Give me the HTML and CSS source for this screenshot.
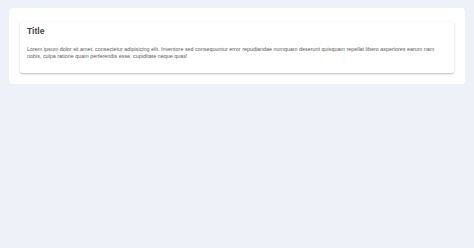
FILE: index.html
```html
<!DOCTYPE html>
<html>
<head>
<meta charset="utf-8">
<link rel="stylesheet" href="styles.css">
</head>
<body>
<div class="panel">
  <div class="card">
    <h1 class="title">Title</h1>
    <p class="text">Lorem ipsum dolor sit amet, consectetur adipisicing elit. Inventore sed consequuntur error repudiandae numquam deserunt quisquam repellat libero asperiores earum nam nobis, culpa ratione quam perferendis esse, cupiditate neque quas!</p>
  </div>
</div>
</body>
</html>
```
FILE: styles.css
```css
html, body {
  margin: 0;
  background: #eef1f7;
  font-family: "Liberation Sans", Arial, sans-serif;
}
body {
  padding: 8px 9px;
}
.panel {
  background: #ffffff;
  border-radius: 4px;
  padding: 14px 11px 11px;
}
.card {
  background: #ffffff;
  border-radius: 2px;
  box-shadow: 0 1px 2px rgba(0, 0, 0, 0.25), 0 0 1px rgba(0, 0, 0, 0.06);
  padding: 3px 7px 13px;
}
.title {
  margin: 0 0 9px;
  font-size: 8.6px;
  font-weight: bold;
  color: #444444;
  line-height: 12px;
}
.text {
  margin: 0;
  font-size: 5.4px;
  line-height: 7px;
  color: #5c5c5c;
}
```
